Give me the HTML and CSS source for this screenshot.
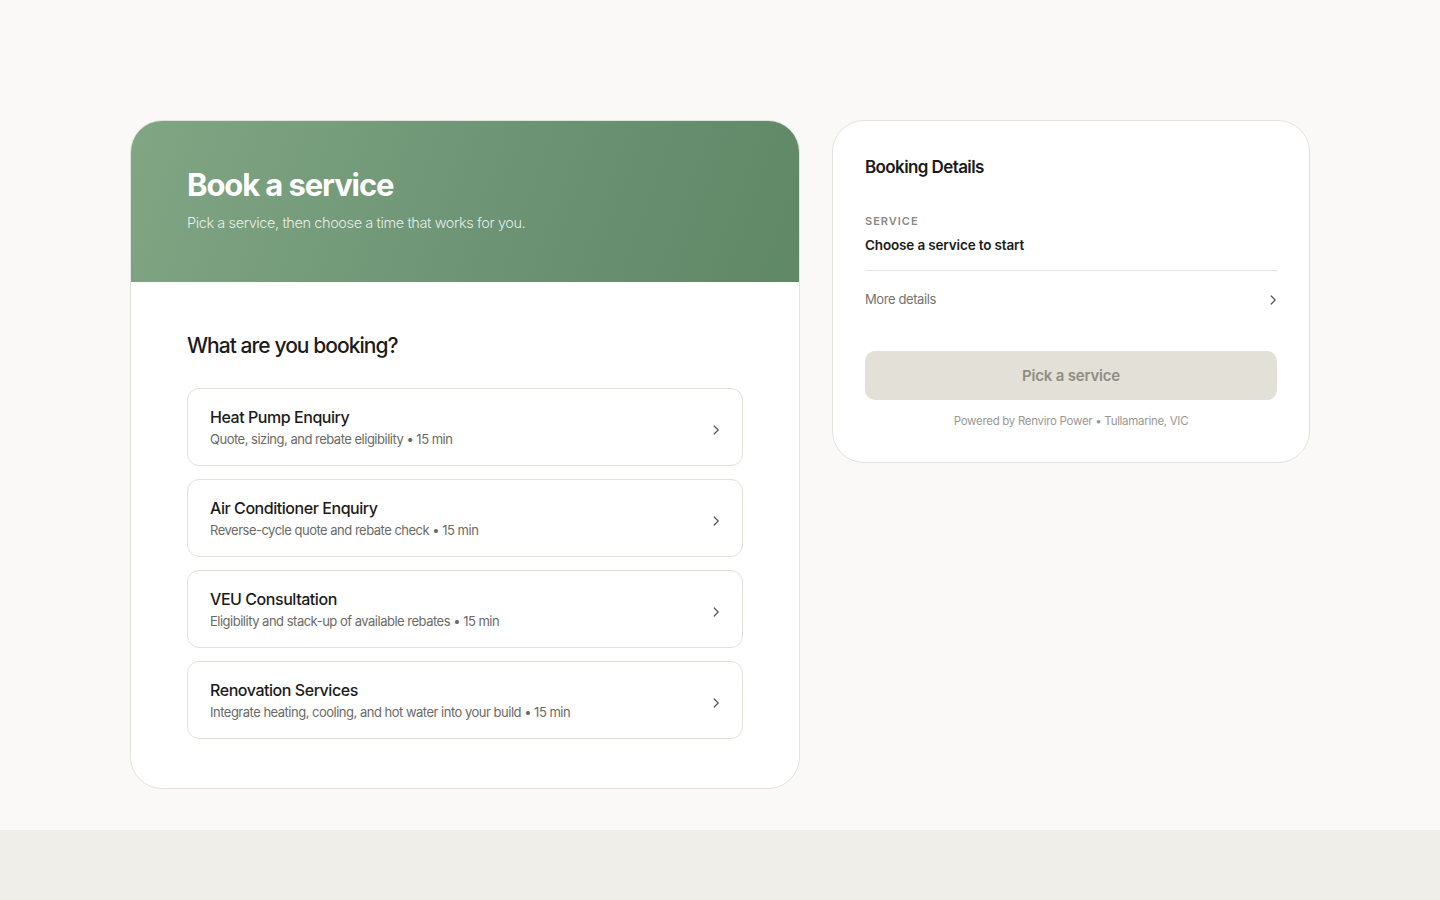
FILE: index.html
```html
<!DOCTYPE html>
<html lang="en">
<head>
<meta charset="utf-8">
<title>Book a service</title>
<link rel="stylesheet" href="styles.css">
</head>
<body>
<main class="page">
  <div class="layout">
    <section class="card main-card">
      <header class="hero">
        <h1 class="hero-title">Book a service</h1>
        <p class="hero-sub">Pick a service, then choose a time that works for you.</p>
      </header>
      <div class="main-body">
        <h2 class="section-title">What are you booking?</h2>
        <ul class="services">
          <li class="service">
            <div class="service-text">
              <div class="service-name">Heat Pump Enquiry</div>
              <div class="service-desc">Quote, sizing, and rebate eligibility • 15 min</div>
            </div>
            <svg class="chev" viewBox="0 0 16 16" width="16" height="16"><path d="M6.2 4 10.2 8 6.2 12" fill="none" stroke="currentColor" stroke-width="1.2" stroke-linecap="round" stroke-linejoin="round"/></svg>
          </li>
          <li class="service">
            <div class="service-text">
              <div class="service-name">Air Conditioner Enquiry</div>
              <div class="service-desc">Reverse-cycle quote and rebate check • 15 min</div>
            </div>
            <svg class="chev" viewBox="0 0 16 16" width="16" height="16"><path d="M6.2 4 10.2 8 6.2 12" fill="none" stroke="currentColor" stroke-width="1.2" stroke-linecap="round" stroke-linejoin="round"/></svg>
          </li>
          <li class="service">
            <div class="service-text">
              <div class="service-name">VEU Consultation</div>
              <div class="service-desc">Eligibility and stack-up of available rebates • 15 min</div>
            </div>
            <svg class="chev" viewBox="0 0 16 16" width="16" height="16"><path d="M6.2 4 10.2 8 6.2 12" fill="none" stroke="currentColor" stroke-width="1.2" stroke-linecap="round" stroke-linejoin="round"/></svg>
          </li>
          <li class="service">
            <div class="service-text">
              <div class="service-name">Renovation Services</div>
              <div class="service-desc">Integrate heating, cooling, and hot water into your build • 15 min</div>
            </div>
            <svg class="chev" viewBox="0 0 16 16" width="16" height="16"><path d="M6.2 4 10.2 8 6.2 12" fill="none" stroke="currentColor" stroke-width="1.2" stroke-linecap="round" stroke-linejoin="round"/></svg>
          </li>
        </ul>
      </div>
    </section>

    <aside class="card side-card">
      <h2 class="side-title">Booking Details</h2>
      <div class="detail">
        <div class="label">SERVICE</div>
        <div class="value">Choose a service to start</div>
      </div>
      <div class="more">
        <span>More details</span>
        <svg class="chev" viewBox="0 0 16 16" width="16" height="16"><path d="M6.2 4 10.2 8 6.2 12" fill="none" stroke="currentColor" stroke-width="1.2" stroke-linecap="round" stroke-linejoin="round"/></svg>
      </div>
      <button class="cta" disabled>Pick a service</button>
      <p class="powered">Powered by Renviro Power • Tullamarine, VIC</p>
    </aside>
  </div>
</main>
<footer class="band"></footer>
</body>
</html>
```

FILE: styles.css
```css
* { box-sizing: border-box; }
html, body { margin: 0; padding: 0; }
body {
  background: #faf9f7;
  font-family: Inter, "Noto Sans", "Liberation Sans", sans-serif;
  color: #1b1b1a;
}
.page {
  min-height: 830px;
  padding-top: 120px;
}
.layout {
  display: flex;
  align-items: flex-start;
  gap: 32px;
  justify-content: center;
}
.card {
  background: #fff;
  border: 1px solid #e4e2dd;
  border-radius: 32px;
}
.main-card {
  width: 670px;
  overflow: hidden;
}
.hero {
  height: 161px;
  padding: 44px 56px 0;
  background: linear-gradient(110deg, #80a684 0%, #6e9575 50%, #5f8867 100%);
  color: #fff;
}
.hero-title {
  margin: 0;
  font-size: 31px;
  font-weight: 700;
  letter-spacing: -1.1px;
  line-height: 40px;
}
.hero-sub {
  margin: 9px 0 0;
  font-size: 14.5px;
  font-weight: 300;
  letter-spacing: -0.4px;
  color: rgba(255,255,255,0.85);
}
.main-body {
  padding: 50px 56px 49px;
}
.section-title {
  margin: 0 0 28px;
  font-size: 21px;
  font-weight: 500;
  letter-spacing: -0.95px;
  line-height: 28px;
}
.services {
  list-style: none;
  margin: 0;
  padding: 0;
  display: flex;
  flex-direction: column;
  gap: 13px;
}
.service {
  height: 78px;
  border: 1px solid #e2e0db;
  border-radius: 12px;
  padding: 0 18px 0 22px;
  display: flex;
  align-items: center;
  justify-content: space-between;
}
.service .chev { margin-top: 5px; }
.service-name {
  font-size: 16px;
  font-weight: 500;
  letter-spacing: -0.45px;
  line-height: 22px;
}
.service-desc {
  margin-top: 1px;
  font-size: 13px;
  font-weight: 400;
  color: #6b6a66;
  letter-spacing: -0.5px;
  line-height: 20px;
}
.chev { color: #555; flex: none; }

.side-card {
  width: 478px;
  padding: 34px 32px 33px;
}
.side-title {
  margin: 0;
  font-size: 17px;
  font-weight: 600;
  letter-spacing: -0.6px;
  line-height: 24px;
}
.detail {
  margin-top: 34px;
  padding-bottom: 16px;
  border-bottom: 1px solid #e3e1dc;
}
.label {
  font-size: 11px;
  font-weight: 600;
  letter-spacing: 1px;
  color: #8a8985;
  line-height: 16px;
}
.value {
  margin-top: 7px;
  font-size: 13.5px;
  font-weight: 600;
  letter-spacing: -0.15px;
  line-height: 18px;
}
.more {
  display: flex;
  justify-content: space-between;
  align-items: center;
  padding-top: 18px;
  font-size: 13px;
  color: #75736f;
  letter-spacing: -0.4px;
  line-height: 20px;
}
.more .chev { margin-right: -4px; margin-top: 2px; }
.cta {
  display: block;
  width: 100%;
  height: 49px;
  margin-top: 42px;
  border: none;
  border-radius: 10px;
  background: #e3e0d7;
  color: #8f8d85;
  font-family: inherit;
  font-size: 15px;
  font-weight: 600;
  letter-spacing: -0.2px;
}
.powered {
  margin: 13px 0 0;
  text-align: center;
  font-size: 11.5px;
  color: #9a9893;
  letter-spacing: -0.3px;
  line-height: 16px;
}
.band {
  height: 70px;
  background: #efeee9;
}
```
